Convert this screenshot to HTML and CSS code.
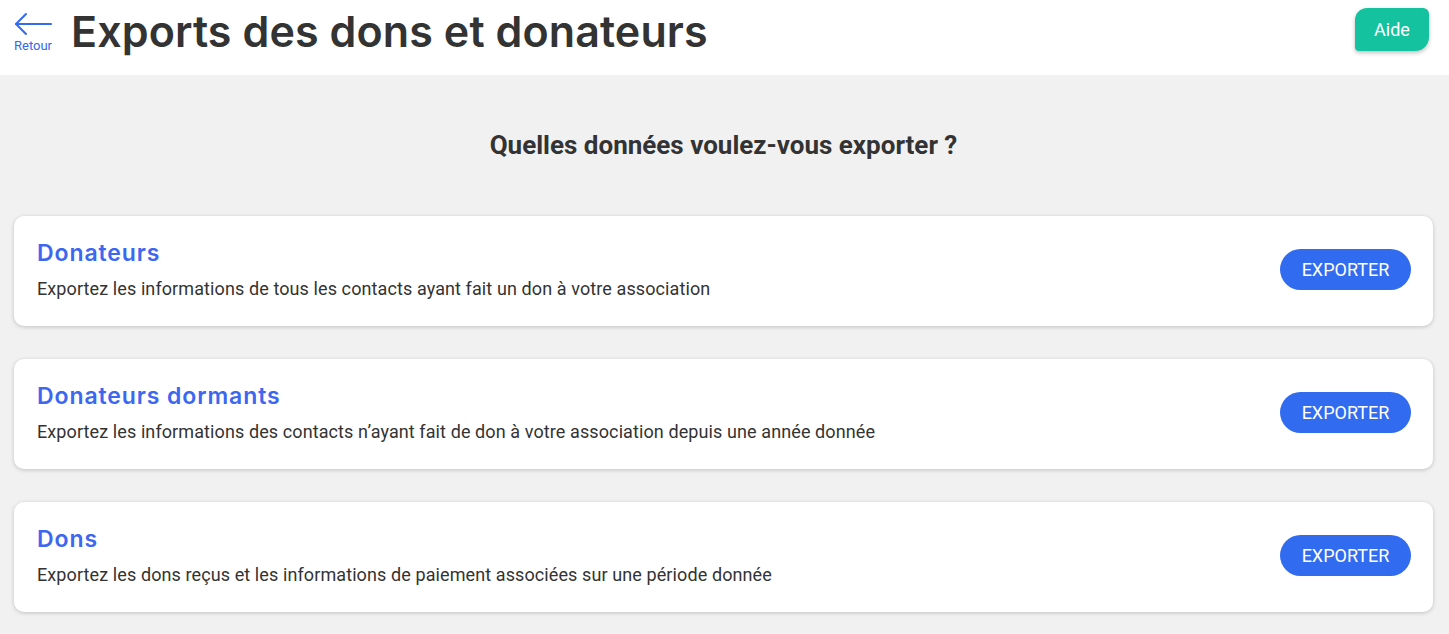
FILE: index.html
```html
<!DOCTYPE html>
<html lang="fr">
<head>
    <meta charset="UTF-8">
    <meta name="viewport" content="width=device-width, initial-scale=1.0">
    <title>Exports des dons et donateurs</title>
    <link rel="stylesheet" href="styles.css">
</head>
<body>
    <header class="topbar">
        <a class="back" href="#">
            <svg width="38" height="24" viewBox="0 0 38 24" fill="none" stroke="#3469f0" stroke-width="2" stroke-linecap="round" stroke-linejoin="round">
                <path d="M2 12 H37"/>
                <path d="M12 2 L2 12 L12 22"/>
            </svg>
            <span>Retour</span>
        </a>
        <h1>Exports des dons et donateurs</h1>
        <button class="help">Aide</button>
    </header>

    <main class="content">
        <h2>Quelles données voulez-vous exporter ?</h2>

        <div class="card">
            <div class="card-text">
                <h3>Donateurs</h3>
                <p>Exportez les informations de tous les contacts ayant fait un don à votre association</p>
            </div>
            <button class="export">EXPORTER</button>
        </div>

        <div class="card">
            <div class="card-text">
                <h3>Donateurs dormants</h3>
                <p>Exportez les informations des contacts n’ayant fait de don à votre association depuis une année donnée</p>
            </div>
            <button class="export">EXPORTER</button>
        </div>

        <div class="card">
            <div class="card-text">
                <h3>Dons</h3>
                <p>Exportez les dons reçus et les informations de paiement associées sur une période donnée</p>
            </div>
            <button class="export">EXPORTER</button>
        </div>
    </main>
</body>
</html>
```

FILE: styles.css
```css
body {
    margin: 0;
    font-family: Roboto, "Liberation Sans", sans-serif;
    background-color: #f1f1f1;
    color: #333;
}
.topbar {
    height: 75px;
    background-color: #fff;
    display: flex;
    align-items: flex-start;
    padding: 0 20px 0 14px;
}
.back {
    display: flex;
    flex-direction: column;
    align-items: center;
    margin-top: 12px;
    text-decoration: none;
    color: #3469f0;
    font-size: 13px;
}
.back svg {
    display: block;
}
.back span {
    margin-top: 2px;
}
.topbar h1 {
    margin: 5px 0 0 19px;
    font-family: Inter, "Open Sans", sans-serif;
    font-weight: 600;
    font-size: 43px;
    letter-spacing: 0.1px;
    color: #333;
    flex: 1;
}
.help {
    margin-top: 8px;
    width: 74px;
    height: 43px;
    border: none;
    background-color: #15c29f;
    color: #fff;
    font-family: Roboto, sans-serif;
    font-weight: 400;
    font-size: 18px;
    border-radius: 12px 6px 14px 4px;
    box-shadow: 0 2px 4px rgba(0, 0, 0, 0.25);
    cursor: pointer;
}
.content {
    padding: 0 16px 20px 14px;
}
.content h2 {
    margin: 0;
    padding: 55px 0 56px;
    line-height: 30px;
    text-align: center;
    font-size: 26px;
    font-weight: 700;
    color: #333;
}
.card {
    background-color: #fff;
    border-radius: 10px;
    box-shadow: 0 1px 4px rgba(0, 0, 0, 0.2);
    display: flex;
    align-items: center;
    padding: 23px 22px 26px 23px;
    margin-bottom: 33px;
}
.card-text {
    flex: 1;
}
.card h3 {
    margin: 0 0 11px;
    line-height: 28px;
    font-family: Inter, "Open Sans", sans-serif;
    font-weight: 600;
    font-size: 23px;
    letter-spacing: 0.9px;
    color: #3d67f0;
}
.card p {
    margin: 0;
    line-height: 22px;
    font-size: 18px;
    letter-spacing: 0.1px;
}
.export {
    width: 131px;
    height: 41px;
    border: none;
    border-radius: 21px;
    background-color: #316bf0;
    color: #fff;
    font-family: Roboto, sans-serif;
    font-size: 18px;
    cursor: pointer;
}
```
